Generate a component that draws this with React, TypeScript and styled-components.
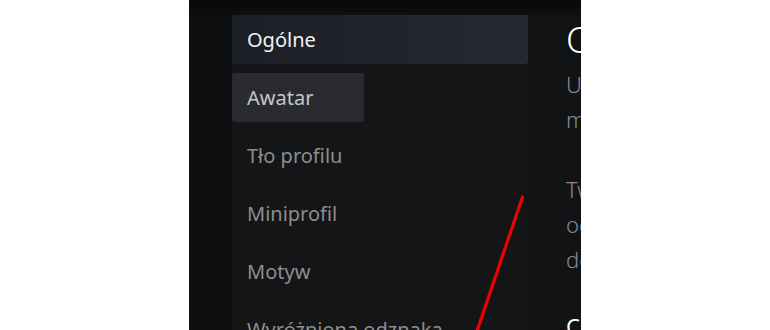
import React from "react";
import styled, { createGlobalStyle } from "styled-components";

const GlobalStyle = createGlobalStyle`
  html, body { margin: 0; padding: 0; background: #ffffff; }
  body { font-family: "Noto Sans", "Open Sans", sans-serif; }
`;

const Page = styled.div`
  display: flex;
  height: 330px;
  padding-left: 189px;
  overflow: hidden;
`;

const Panel = styled.div`
  position: relative;
  width: 392px;
  height: 330px;
  flex-shrink: 0;
  overflow: hidden;
  display: flex;
  gap: 38px;
  padding: 15px 0 0 43px;
  box-sizing: border-box;
  background:
    linear-gradient(to bottom, #08080a 0px, #0c0c0e 10px, rgba(18, 19, 21, 0) 20px),
    linear-gradient(to right, #0e0f11 0px, #0e0f11 43px, #131416 43px, #121315 100%);
`;

const Sidebar = styled.nav`
  width: 296px;
  flex-shrink: 0;
  display: flex;
  flex-direction: column;
  align-items: flex-start;
  gap: 9px;
  background: repeating-linear-gradient(
    to right,
    rgba(255, 255, 255, 0) 0px,
    rgba(255, 255, 255, 0.012) 2px,
    rgba(255, 255, 255, 0) 4px
  );
`;

type Variant = "active" | "hover" | "idle";

const NavItem = styled.div<{ $variant: Variant }>`
  height: 49px;
  flex-shrink: 0;
  display: flex;
  align-items: center;
  padding: 0 15px;
  box-sizing: border-box;
  border-radius: 3px;
  font-size: 20px;
  white-space: nowrap;
  width: ${(p) => (p.$variant === "active" ? "296px" : p.$variant === "hover" ? "132px" : "auto")};
  color: ${(p) => (p.$variant === "active" ? "#f2f2f2" : p.$variant === "hover" ? "#c6c6c8" : "#8d8d8f")};
  background: ${(p) =>
    p.$variant === "active"
      ? "linear-gradient(to right, #1d1f26, #262833)"
      : p.$variant === "hover"
      ? "#2a2b30"
      : "transparent"};
`;

const Content = styled.section`
  width: 420px;
  flex-shrink: 0;
  display: flex;
  flex-direction: column;
  padding-top: 3px;
`;

const Title = styled.h1`
  margin: 0 0 5px 0;
  font-size: 36px;
  font-weight: 300;
  line-height: 44px;
  color: #ffffff;
  white-space: nowrap;
`;

const Paragraph = styled.p`
  margin: 0 0 35px 0;
  font-size: 22px;
  font-weight: 300;
  line-height: 35px;
  color: #8a8b8e;
  white-space: nowrap;
`;

const SubTitle = styled.h2`
  margin: -3px 0 0 0;
  font-size: 22px;
  font-weight: 400;
  line-height: 35px;
  color: #ffffff;
  white-space: nowrap;
`;

const Annotation = styled.svg`
  position: absolute;
  left: 0;
  top: 0;
  width: 392px;
  height: 330px;
  pointer-events: none;
`;

const items: { label: string; variant: Variant }[] = [
  { label: "Ogólne", variant: "active" },
  { label: "Awatar", variant: "hover" },
  { label: "Tło profilu", variant: "idle" },
  { label: "Miniprofil", variant: "idle" },
  { label: "Motyw", variant: "idle" },
  { label: "Wyróżniona odznaka", variant: "idle" },
];

export default function App() {
  return (
    <>
      <GlobalStyle />
      <Page>
        <Panel>
          <Sidebar>
            {items.map((it) => (
              <NavItem key={it.label} $variant={it.variant}>
                {it.label}
              </NavItem>
            ))}
          </Sidebar>
          <Content>
            <Title>Ogólne</Title>
            <Paragraph>
              Ustaw nazwę profilu i szczegóły. Podanie
              <br />
              może pomóc znajomym odnaleźć cię.
            </Paragraph>
            <Paragraph>
              Twoja nazwa profilu i awatar reprezentują
              <br />
              ogół twojej osoby w całym serwisie i muszą
              <br />
              dostosować się do zasad.
            </Paragraph>
            <SubTitle>Ciekawostki</SubTitle>
          </Content>
          <Annotation viewBox="0 0 392 330">
            <line x1="333.5" y1="197" x2="287" y2="334" stroke="#ee0000" strokeWidth="3.2" strokeLinecap="round" />
          </Annotation>
        </Panel>
      </Page>
    </>
  );
}
